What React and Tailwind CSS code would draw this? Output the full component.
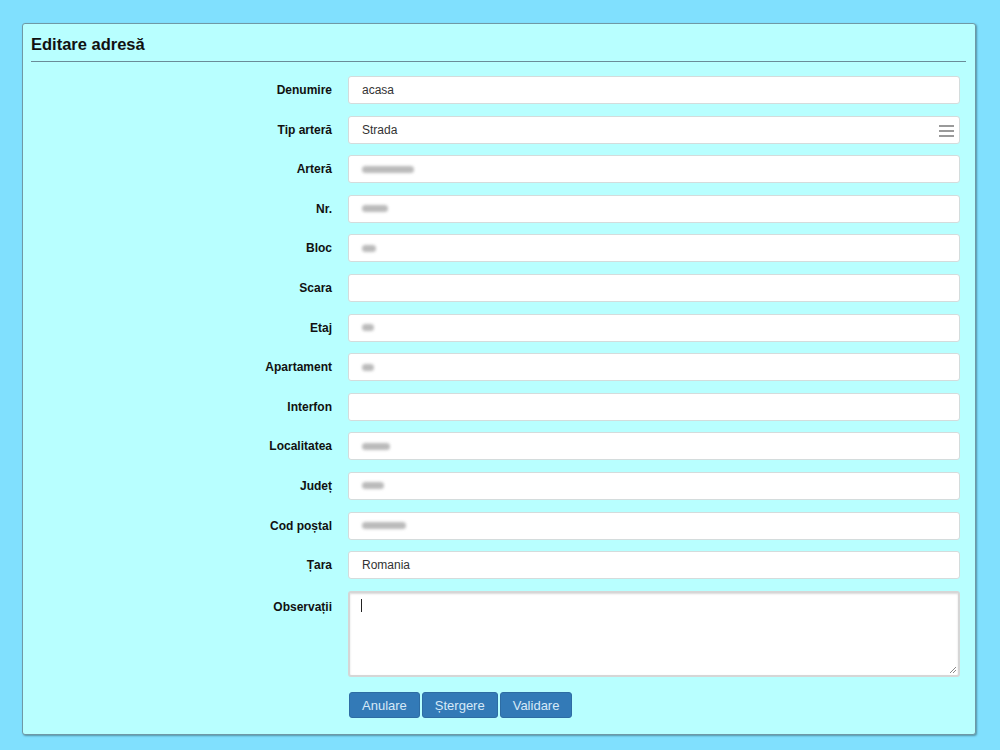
import React from 'react';

const FIELDS = [
  { label: 'Denumire', value: 'acasa' },
  { label: 'Tip arteră', value: 'Strada', select: true },
  { label: 'Arteră', blur: 'Xxxxxxx', w: 'w-[52px]' },
  { label: 'Nr.', blur: 'xxx', w: 'w-[26px]' },
  { label: 'Bloc', blur: 'x', w: 'w-[14px]' },
  { label: 'Scara' },
  { label: 'Etaj', blur: 'x', w: 'w-[12px]' },
  { label: 'Apartament', blur: 'x', w: 'w-[12px]' },
  { label: 'Interfon' },
  { label: 'Localitatea', blur: 'xxxx', w: 'w-[28px]' },
  { label: 'Județ', blur: 'xx', w: 'w-[22px]' },
  { label: 'Cod poștal', blur: 'xxxxxx', w: 'w-[44px]' },
  { label: 'Țara', value: 'Romania' },
];

function Blurred({ w }) {
  // blurred out personal data in the reference
  return <span className={`inline-block h-[7px] ${w} rounded-full bg-[#a9a9a9] blur-[1.5px] opacity-80`} />;
}

function Row({ field }) {
  return (
    <div className="flex items-center">
      <label className="w-[317px] shrink-0 pr-[16px] text-right text-[12px] font-bold text-[#111]">
        {field.label}
      </label>
      <div className="relative flex-1 h-[28px] bg-white border border-[#d4dcdc] rounded-[3px] flex items-center pl-[13px] text-[12px] text-[#333]">
        {field.value && <span>{field.value}</span>}
        {field.blur && <Blurred w={field.w} />}
        {field.select && (
          <div className="absolute right-[5px] top-[8px] flex flex-col gap-[3px]">
            <span className="block w-[15px] h-[2px] bg-[#9a9a9a]" />
            <span className="block w-[15px] h-[2px] bg-[#9a9a9a]" />
            <span className="block w-[15px] h-[2px] bg-[#9a9a9a]" />
          </div>
        )}
      </div>
    </div>
  );
}

export default function App() {
  return (
    <div
      className="w-[1000px] h-[750px] bg-[#80e0fe] pt-[23px] pl-[22px]"
      style={{ fontFamily: '"Liberation Sans", Arial, sans-serif' }}
    >
      <div className="w-[954px] h-[712px] bg-[#b8ffff] border border-[#6f99a6] rounded-[3px] shadow-[1px_1px_2px_rgba(0,0,0,0.35)]">
        <div className="pl-[8px] pr-[9px] pt-[10px]">
          <h1 className="text-[16.5px] font-bold text-[#111] leading-[20px] pb-[7px] border-b border-[#6a8c98]">
            Editare adresă
          </h1>
        </div>
        <div className="pl-[8px] pr-[15px] pt-[14px] flex flex-col gap-[11.6px]">
          {FIELDS.map(f => (
            <Row key={f.label} field={f} />
          ))}
          <div className="flex">
            <label className="w-[317px] shrink-0 pr-[16px] pt-[7px] text-right text-[12px] font-bold text-[#111]">
              Observații
            </label>
            <div className="relative flex-1 h-[86px] bg-white border-2 border-[#d6d6d6] rounded-[3px] shadow-[inset_0_1px_2px_rgba(0,0,0,0.15)]">
              <span className="absolute left-[11px] top-[6px] w-[1px] h-[13px] bg-[#222]" />
              <svg className="absolute right-[1px] bottom-[1px]" width="8" height="8" viewBox="0 0 8 8">
                <path d="M7 1L1 7M7 4L4 7" stroke="#888" strokeWidth="1" />
              </svg>
            </div>
          </div>
          <div className="flex gap-[2px] pl-[318px] pt-[4px]">
            {['Anulare', 'Ștergere', 'Validare'].map(b => (
              <button
                key={b}
                className="h-[26px] px-[12px] bg-[#337ab7] border border-[#2e6da4] rounded-[3px] text-[13px] text-[#d6e9f8]"
              >
                {b}
              </button>
            ))}
          </div>
        </div>
      </div>
    </div>
  );
}
